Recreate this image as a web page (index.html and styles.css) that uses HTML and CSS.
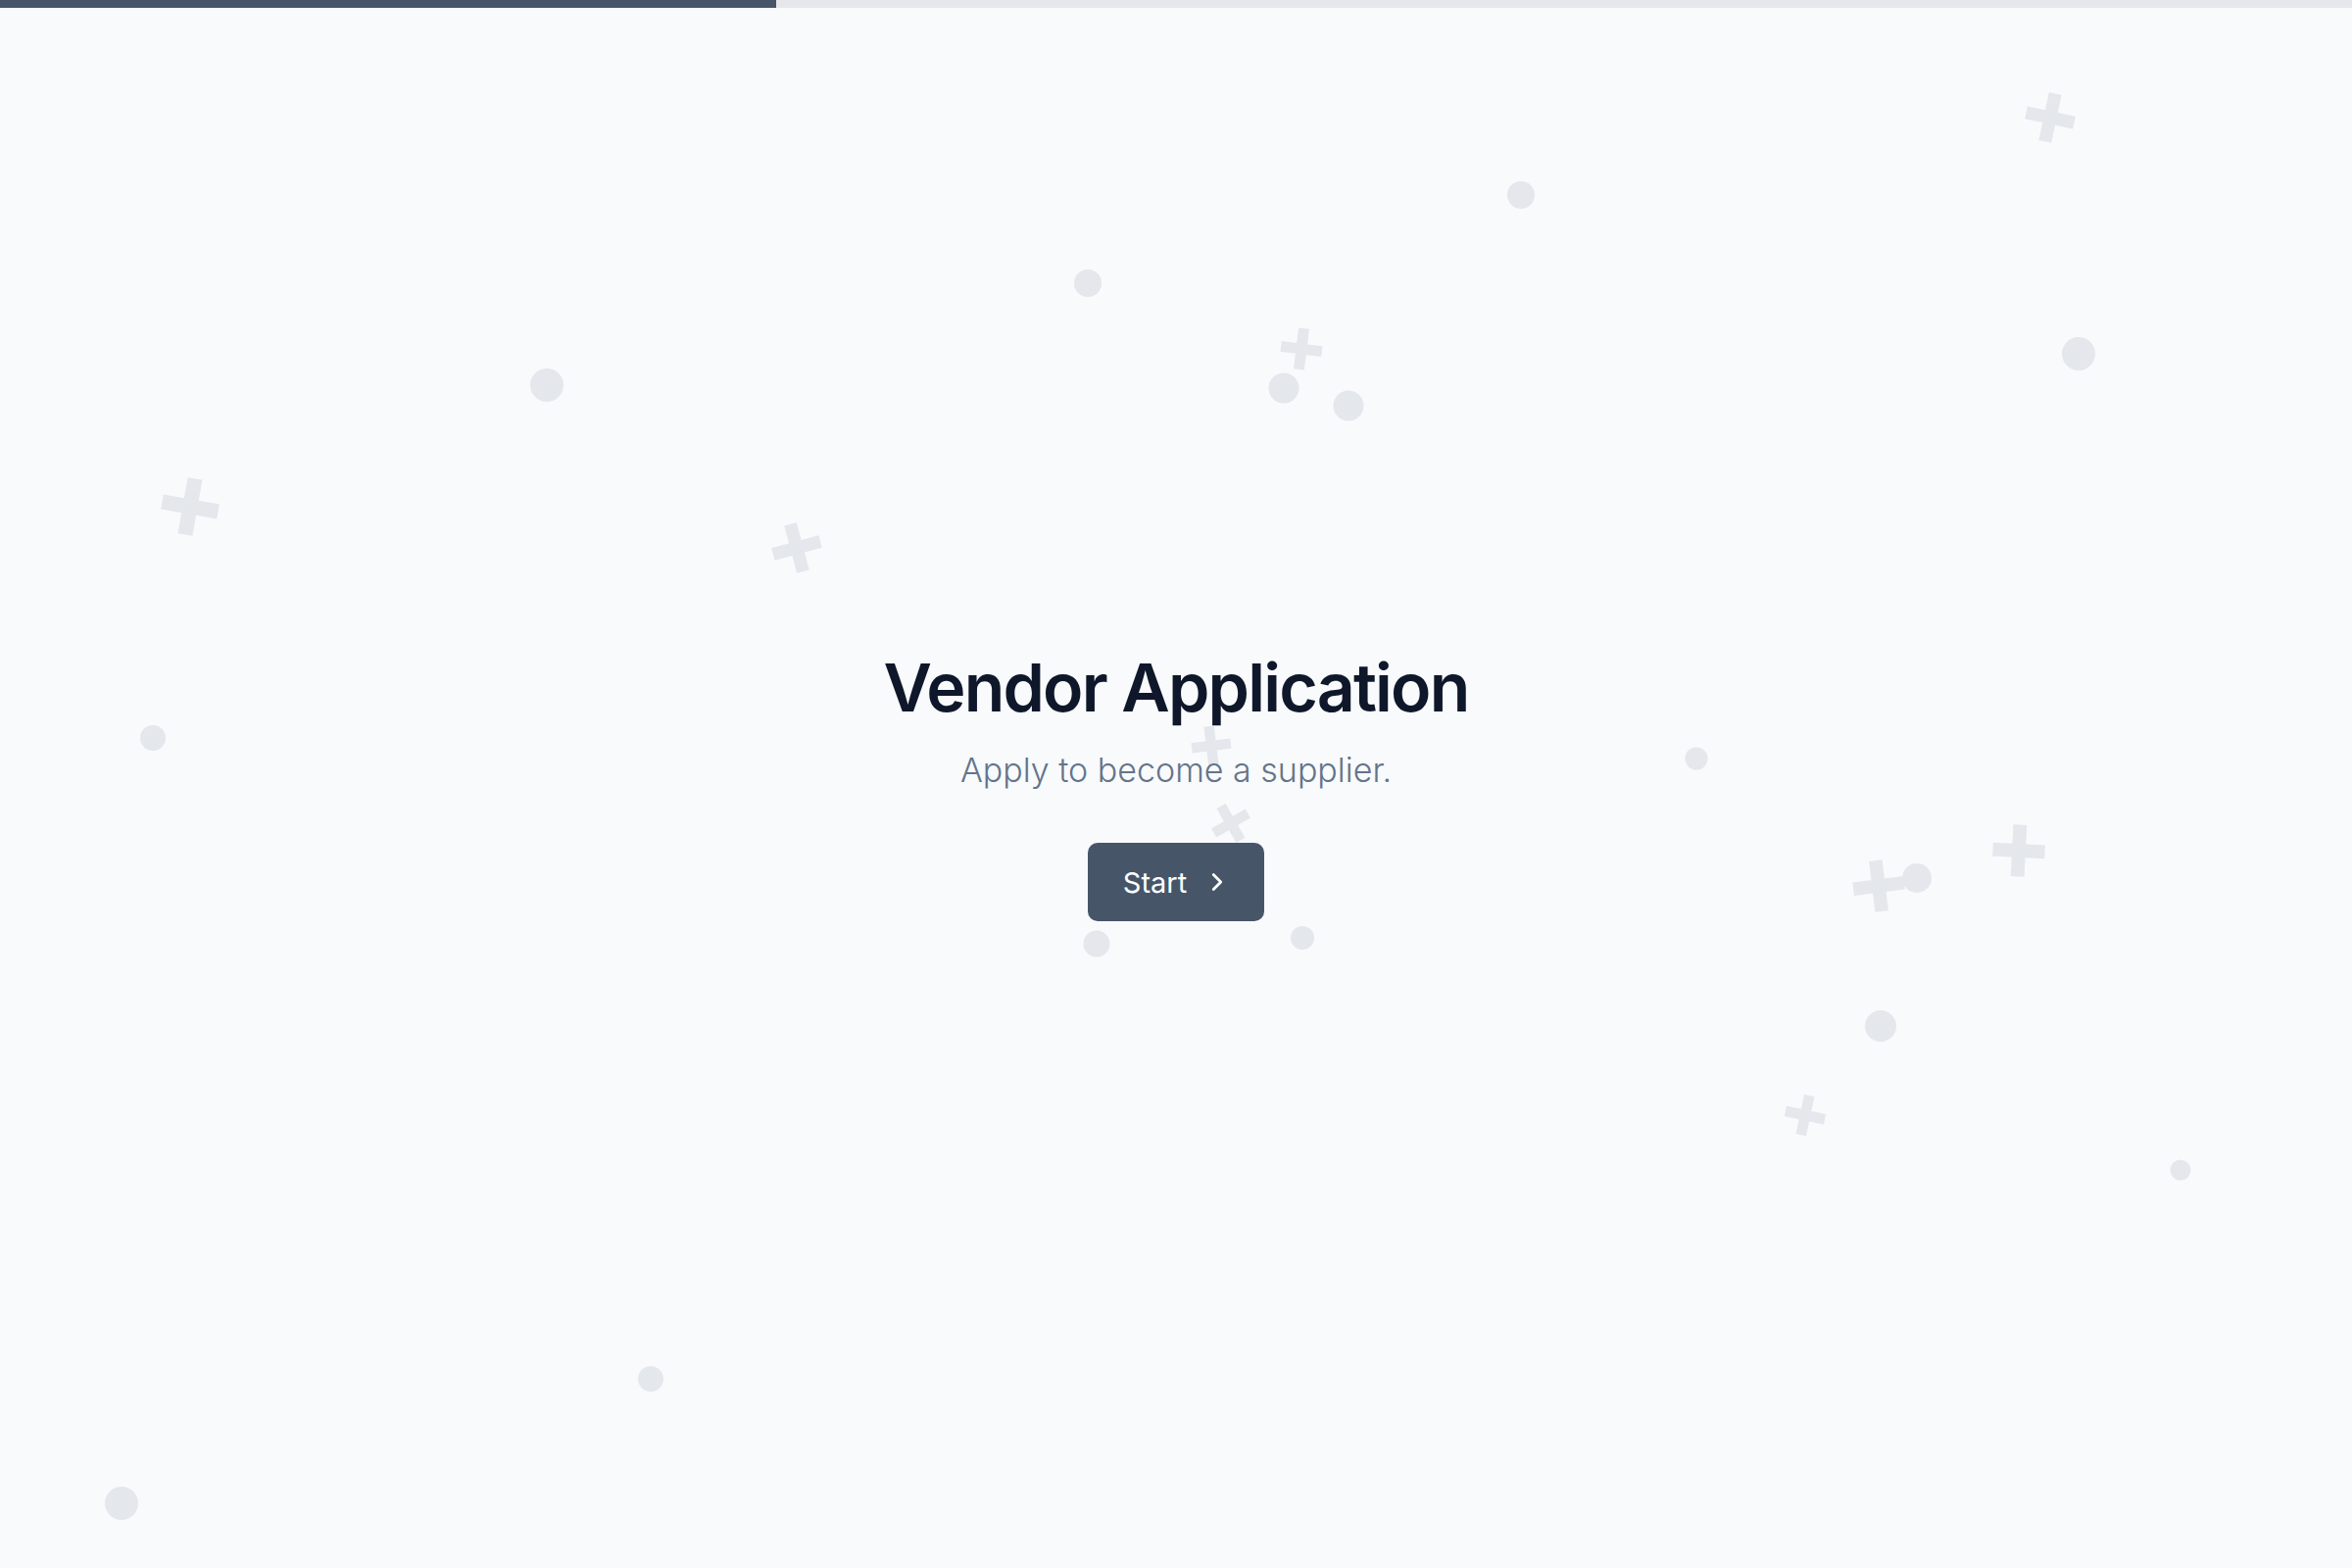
FILE: index.html
```html
<!DOCTYPE html>
<html lang="en">
<head>
	<meta charset="UTF-8">
	<title>Vendor Application</title>
	<link rel="stylesheet" href="styles.css">
</head>
<body>
	<div class="progress">
		<div class="progress-fill" style="width: 33%"></div>
	</div>

	<svg class="backdrop" viewBox="0 0 2400 1600" preserveAspectRatio="xMidYMid slice" aria-hidden="true">
		<defs>
			<path id="plus" d="M-50 -13h100v26h-100z M-13 -50h26v100h-26z"/>
		</defs>
		<g class="dots">
			<circle cx="1552" cy="199" r="14"/>
			<circle cx="1110" cy="289" r="14"/>
			<circle cx="558" cy="393" r="17"/>
			<circle cx="1310" cy="396" r="15.5"/>
			<circle cx="1376" cy="414" r="15.5"/>
			<circle cx="2121" cy="361" r="17"/>
			<circle cx="156" cy="753" r="13"/>
			<circle cx="1731" cy="774" r="11.5"/>
			<circle cx="1956" cy="896" r="15"/>
			<circle cx="1119" cy="963" r="13.5"/>
			<circle cx="1329" cy="957" r="12"/>
			<circle cx="1919" cy="1047" r="16"/>
			<circle cx="2225" cy="1194" r="10.5"/>
			<circle cx="664" cy="1407" r="13"/>
			<circle cx="124" cy="1534" r="17"/>
		</g>
		<g class="plusses">
			<use href="#plus" transform="translate(2092 120) rotate(12) scale(0.5)"/>
			<use href="#plus" transform="translate(1328 356) rotate(7) scale(0.42)"/>
			<use href="#plus" transform="translate(194 517) rotate(10) scale(0.58)"/>
			<use href="#plus" transform="translate(813 559) rotate(-15) scale(0.5)"/>
			<use href="#plus" transform="translate(1236 761) rotate(-7) scale(0.4)"/>
			<use href="#plus" transform="translate(1256 840) rotate(-30) scale(0.4)"/>
			<use href="#plus" transform="translate(1917 904) rotate(-7) scale(0.52)"/>
			<use href="#plus" transform="translate(2060 868) rotate(3) scale(0.53)"/>
			<use href="#plus" transform="translate(1842 1138) rotate(12) scale(0.41)"/>
		</g>
	</svg>

	<main class="intro">
		<div class="intro-content">
			<h1>Vendor Application</h1>
			<p>Apply to become a supplier.</p>
			<button class="start-btn" type="button">
				Start
				<svg viewBox="0 0 24 24" fill="none" stroke="currentColor" stroke-width="2.2" stroke-linecap="round" stroke-linejoin="round"><path d="m9 18 6-6-6-6"/></svg>
			</button>
		</div>
	</main>
</body>
</html>
```

FILE: styles.css
```css
*{
	margin:0;
	padding:0;
	box-sizing: border-box;
}

body{
	position: relative;
	min-height: 100vh;
	background: #f8fafc;
	font-family: "Inter", "Liberation Sans", sans-serif;
	overflow: hidden;
}

.progress{
	position: relative;
	z-index: 2;
	height: 8px;
	background: #e5e7eb;
}

.progress-fill{
	height: 100%;
	background: #475569;
}

.backdrop{
	position: absolute;
	top: 0;
	left: 0;
	width: 100%;
	height: 100%;
	z-index: 0;
}

.backdrop .dots,
.backdrop .plusses{
	fill: #e4e7eb;
}

.intro{
	position: relative;
	z-index: 1;
	height: calc(100vh - 8px);
	display: flex;
	align-items: center;
	justify-content: center;
}

.intro-content{
	display: flex;
	flex-direction: column;
	align-items: center;
	padding-bottom: 9px;
}

.intro h1{
	font-size: 68px;
	line-height: 84px;
	font-weight: 600;
	color: #0f172a;
	letter-spacing: -1.8px;
}

.intro p{
	margin-top: 19px;
	font-size: 34px;
	line-height: 48px;
	font-weight: 300;
	color: #64748b;
}

.start-btn{
	margin-top: 50px;
	height: 80px;
	padding: 0 33px 0 36px;
	display: flex;
	align-items: center;
	gap: 16px;
	border: none;
	border-radius: 10px;
	background: #475569;
	color: #fff;
	font-family: inherit;
	font-size: 29px;
	font-weight: 400;
	cursor: pointer;
}

.start-btn svg{
	width: 30px;
	height: 30px;
}
```
